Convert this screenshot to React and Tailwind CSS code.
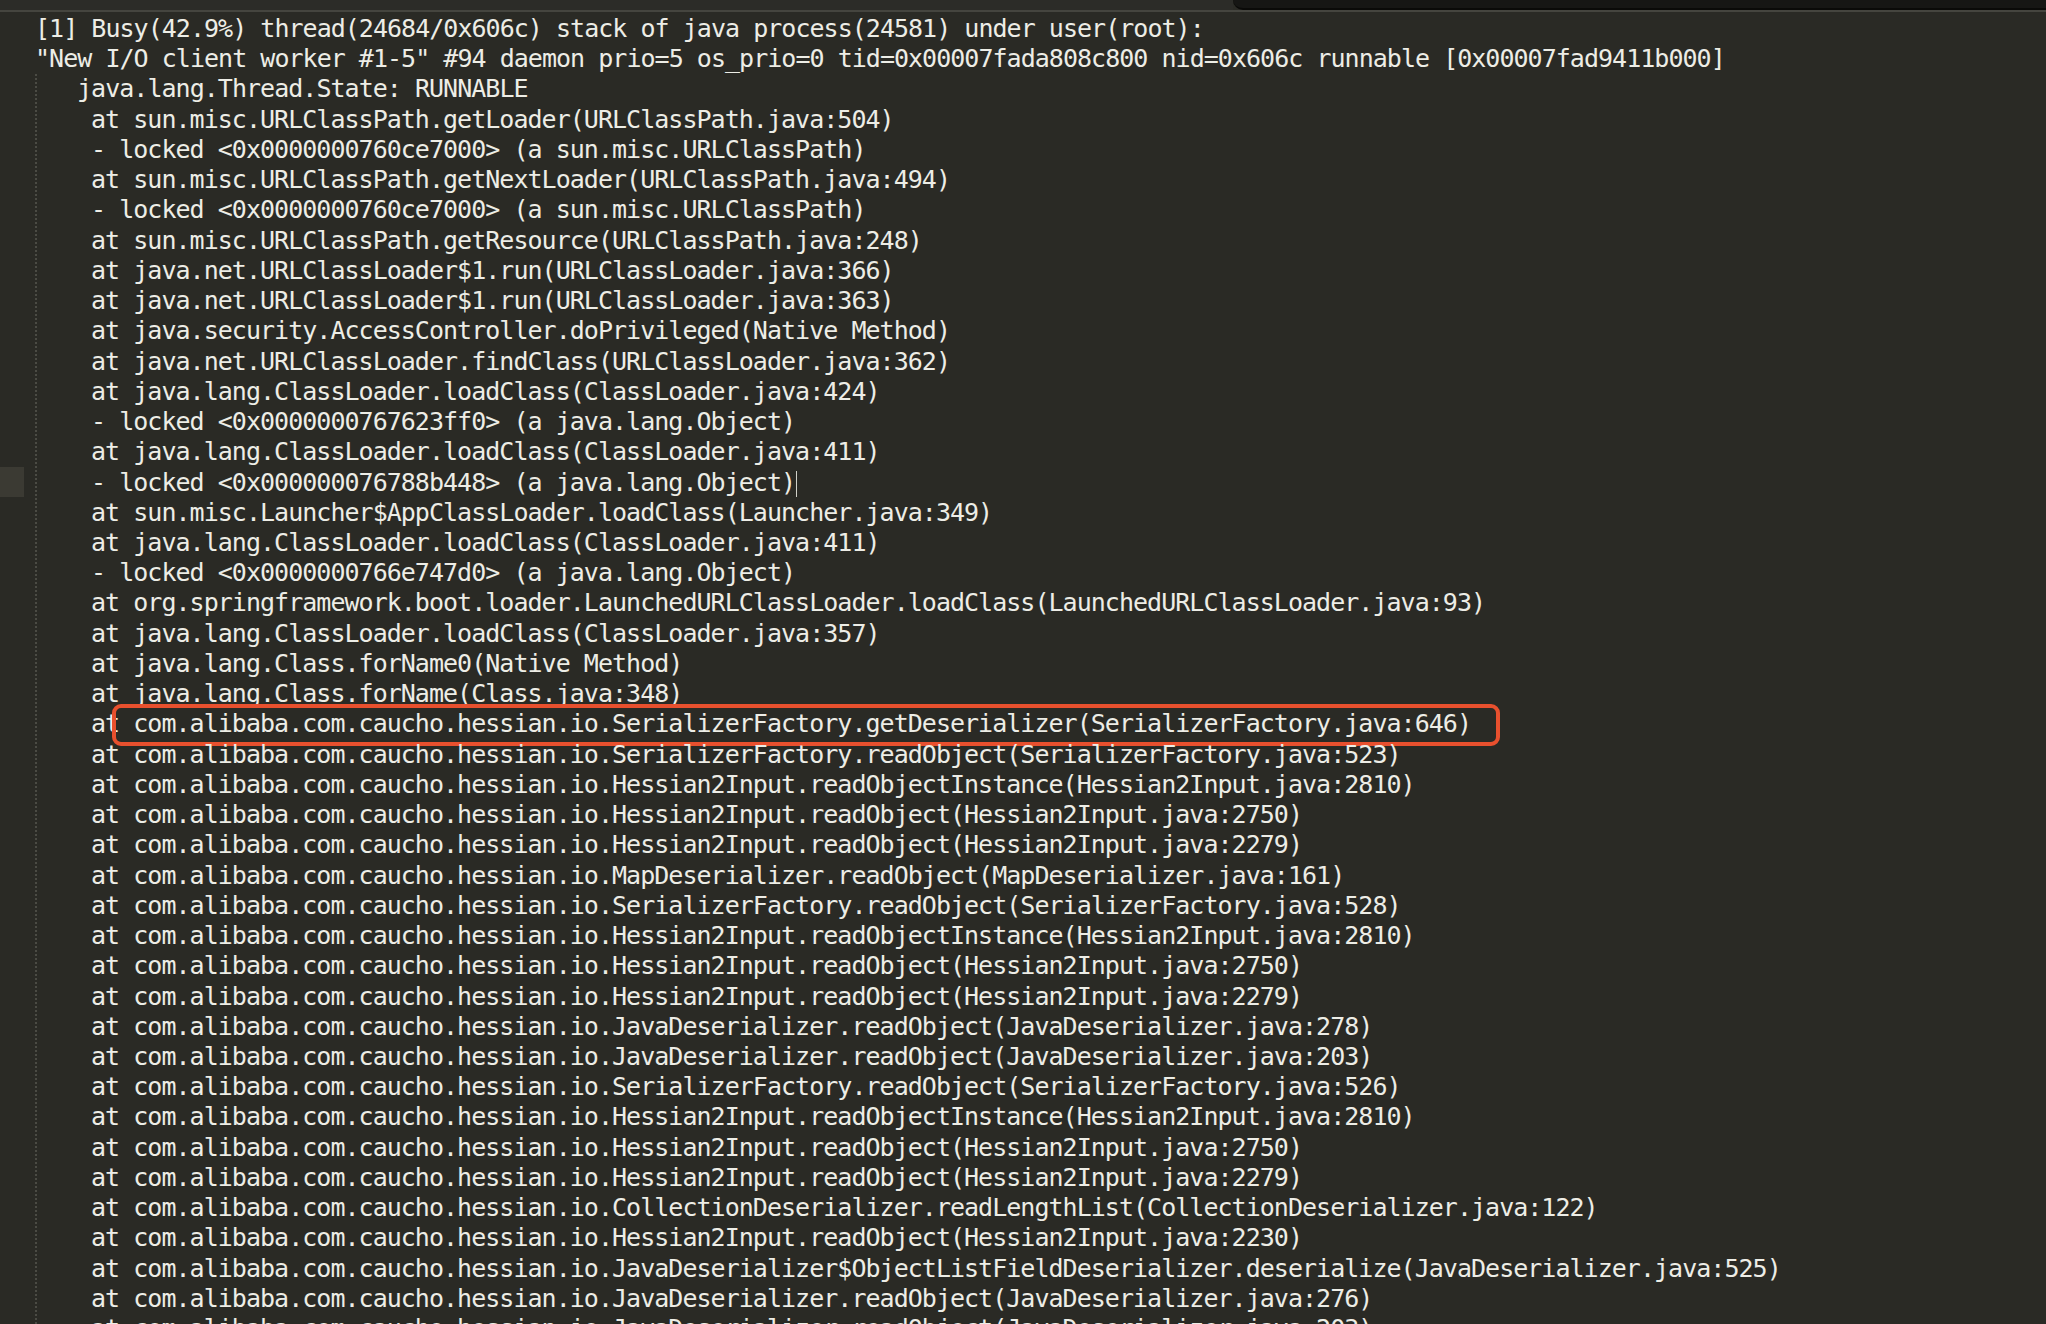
const H = 'com.alibaba.com.caucho.hessian.io.';

const stack = [
  'at sun.misc.URLClassPath.getLoader(URLClassPath.java:504)',
  '- locked <0x0000000760ce7000> (a sun.misc.URLClassPath)',
  'at sun.misc.URLClassPath.getNextLoader(URLClassPath.java:494)',
  '- locked <0x0000000760ce7000> (a sun.misc.URLClassPath)',
  'at sun.misc.URLClassPath.getResource(URLClassPath.java:248)',
  'at java.net.URLClassLoader$1.run(URLClassLoader.java:366)',
  'at java.net.URLClassLoader$1.run(URLClassLoader.java:363)',
  'at java.security.AccessController.doPrivileged(Native Method)',
  'at java.net.URLClassLoader.findClass(URLClassLoader.java:362)',
  'at java.lang.ClassLoader.loadClass(ClassLoader.java:424)',
  '- locked <0x0000000767623ff0> (a java.lang.Object)',
  'at java.lang.ClassLoader.loadClass(ClassLoader.java:411)',
  '- locked <0x000000076788b448> (a java.lang.Object)',
  'at sun.misc.Launcher$AppClassLoader.loadClass(Launcher.java:349)',
  'at java.lang.ClassLoader.loadClass(ClassLoader.java:411)',
  '- locked <0x0000000766e747d0> (a java.lang.Object)',
  'at org.springframework.boot.loader.LaunchedURLClassLoader.loadClass(LaunchedURLClassLoader.java:93)',
  'at java.lang.ClassLoader.loadClass(ClassLoader.java:357)',
  'at java.lang.Class.forName0(Native Method)',
  'at java.lang.Class.forName(Class.java:348)',
  'at ' + H + 'SerializerFactory.getDeserializer(SerializerFactory.java:646)',
  'at ' + H + 'SerializerFactory.readObject(SerializerFactory.java:523)',
  'at ' + H + 'Hessian2Input.readObjectInstance(Hessian2Input.java:2810)',
  'at ' + H + 'Hessian2Input.readObject(Hessian2Input.java:2750)',
  'at ' + H + 'Hessian2Input.readObject(Hessian2Input.java:2279)',
  'at ' + H + 'MapDeserializer.readObject(MapDeserializer.java:161)',
  'at ' + H + 'SerializerFactory.readObject(SerializerFactory.java:528)',
  'at ' + H + 'Hessian2Input.readObjectInstance(Hessian2Input.java:2810)',
  'at ' + H + 'Hessian2Input.readObject(Hessian2Input.java:2750)',
  'at ' + H + 'Hessian2Input.readObject(Hessian2Input.java:2279)',
  'at ' + H + 'JavaDeserializer.readObject(JavaDeserializer.java:278)',
  'at ' + H + 'JavaDeserializer.readObject(JavaDeserializer.java:203)',
  'at ' + H + 'SerializerFactory.readObject(SerializerFactory.java:526)',
  'at ' + H + 'Hessian2Input.readObjectInstance(Hessian2Input.java:2810)',
  'at ' + H + 'Hessian2Input.readObject(Hessian2Input.java:2750)',
  'at ' + H + 'Hessian2Input.readObject(Hessian2Input.java:2279)',
  'at ' + H + 'CollectionDeserializer.readLengthList(CollectionDeserializer.java:122)',
  'at ' + H + 'Hessian2Input.readObject(Hessian2Input.java:2230)',
  'at ' + H + 'JavaDeserializer$ObjectListFieldDeserializer.deserialize(JavaDeserializer.java:525)',
  'at ' + H + 'JavaDeserializer.readObject(JavaDeserializer.java:276)',
  'at ' + H + 'JavaDeserializer.readObject(JavaDeserializer.java:203)',
];

export default function App() {
  return (
    <div
      className="h-[1324px] w-[2046px] overflow-hidden bg-[#2a2a25] text-[#ededE6] text-[25px] leading-[30.24px] tracking-[-0.97px] whitespace-pre"
      style={{ fontFamily: '"DejaVu Sans Mono", "Liberation Mono", monospace' }}
    >
      {/* tab strip */}
      <div className="flex h-[12px] border-b-2 border-[#45453f]">
        <div className="flex-1 bg-[#2c2c28]" />
        <div className="w-[813px] bg-[#161614] rounded-bl-[10px] border-b-2 border-[#0a0a08]" />
      </div>

      <div className="flex pt-[2px]">
        {/* gutter with current-line marker */}
        <div className="w-[24px] shrink-0">
          <div className="h-[30px] mt-[453px] bg-[#3b3a33]" />
        </div>

        <div className="flex-1 pl-[11px]">
          <div>[1] Busy(42.9%) thread(24684/0x606c) stack of java process(24581) under user(root):</div>
          <div>"New I/O client worker #1-5" #94 daemon prio=5 os_prio=0 tid=0x00007fada808c800 nid=0x606c runnable [0x00007fad9411b000]</div>

          <div className="border-l-2 border-dotted border-[#4b4b44]">
            <div className="pl-[40px]">java.lang.Thread.State: RUNNABLE</div>
            {stack.map((line, i) => (
              <div key={i} className="relative pl-[54px]">
                {line}
                {i === 12 && (
                  <span className="inline-block w-px h-[26px] bg-[#d0d0c8] align-middle ml-[1px]" />
                )}
                {i === 20 && (
                  <div className="absolute left-[75px] -top-[5px] w-[1388px] h-[42px] border-4 border-[#e8502e] rounded-[9px]" />
                )}
              </div>
            ))}
          </div>
        </div>
      </div>
    </div>
  );
}
